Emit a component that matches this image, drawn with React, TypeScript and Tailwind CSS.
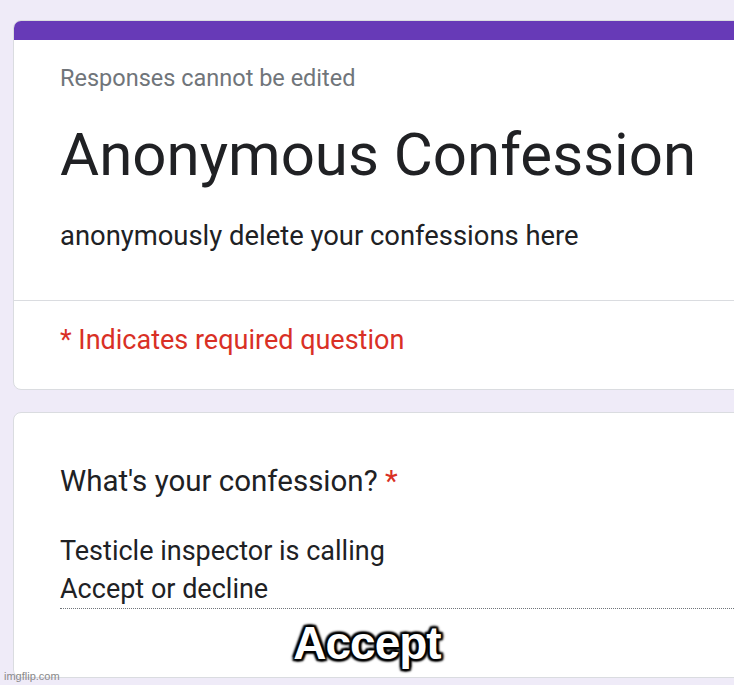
const PURPLE = 'bg-[#673ab7]';

function HeaderCard() {
  return (
    <div className="w-[760px] rounded-lg border border-[#dadce0] bg-white overflow-hidden">
      <div className={`h-[19px] ${PURPLE}`} />
      <div className="px-[46px] pt-[24px] pb-[48px]">
        <div className="text-[23.5px] leading-[28px] text-[#70757a]">Responses cannot be edited</div>
        <div className="mt-[27px] text-[60px] leading-[72px] text-[#202124]">Anonymous Confession</div>
        <div className="mt-[29px] text-[27.4px] leading-[32px] text-[#202124]">
          anonymously delete your confessions here
        </div>
      </div>
      <div className="border-t border-[#dadce0] px-[46px] pt-[23px] pb-[33px]">
        <div className="text-[27px] leading-[32px] text-[#d93025]">* Indicates required question</div>
      </div>
    </div>
  );
}

function QuestionCard() {
  return (
    <div className="relative w-[760px] h-[266px] rounded-lg border border-[#dadce0] bg-white">
      <div className="pl-[46px] pt-[51px]">
        <div className="text-[29.5px] leading-[34px] text-[#202124]">
          What's your confession? <span className="text-[#d93025]">*</span>
        </div>
        <div className="mt-[34px] border-b border-dotted border-[#70757a] text-[27px] leading-[38px] text-[#202124]">
          <div>Testicle inspector is calling</div>
          <div>Accept or decline</div>
        </div>
      </div>
    </div>
  );
}

export default function App() {
  return (
    <div
      className="relative w-[734px] h-[685px] overflow-hidden bg-[#efebf8]"
      style={{ fontFamily: 'Roboto, "Liberation Sans", sans-serif' }}
    >
      <div className="flex flex-col gap-[22px] pl-[13px] pt-[20px]">
        <HeaderCard />
        <QuestionCard />
      </div>
      <div
        className="absolute left-0 right-0 top-[614px] text-center text-[46px] leading-[58px] font-bold tracking-[-1px] text-white"
        style={{
          fontFamily: '"Liberation Sans", Arial, sans-serif',
          textShadow:
            '2px 2px 2px #000, -2px -2px 2px #000, 2px -2px 2px #000, -2px 2px 2px #000, 0 2px 3px #000, 0 -2px 3px #000, 2px 0 3px #000, -2px 0 3px #000',
        }}
      >
        Accept
      </div>
      <div
        className="absolute left-[4px] bottom-[2px] text-[11px] leading-[14px] text-[#8a8a8a]"
        style={{ fontFamily: '"Liberation Sans", Arial, sans-serif' }}
      >
        imgflip.com
      </div>
    </div>
  );
}
